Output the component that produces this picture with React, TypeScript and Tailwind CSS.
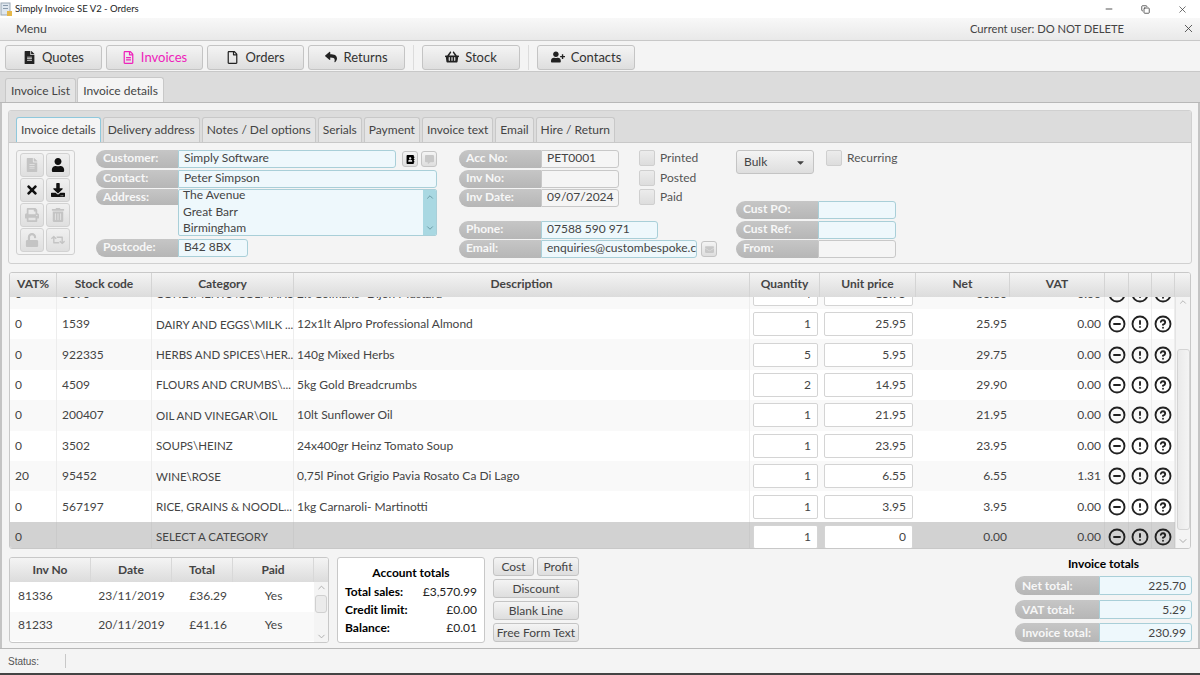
import React from "react";
import { FaFileAlt, FaRegFile, FaRegFileAlt, FaReply, FaShoppingBasket, FaUserPlus, FaUser, FaTimes, FaDownload, FaPrint, FaTrashAlt, FaUnlock, FaRetweet, FaAddressBook, FaEnvelope, FaCommentAlt, FaCaretDown } from "react-icons/fa";
import { CircleMinus, CircleAlert, CircleHelp, ChevronUp, ChevronDown, Minus, X, Copy } from "lucide-react";

const btn = "flex items-center justify-center rounded-[3px] border border-[#c4c4c4] bg-linear-to-b from-[#f4f4f4] to-[#dedede] text-[#333]";

function NavBtn({ icon, label, active, w = "w-[97px]" }: { icon: React.ReactNode; label: string; active?: boolean; w?: string }) {
  return (
    <div className={`${btn} ${w} h-[25px] gap-[6px] text-[13px] ${active ? "text-[#ee22bb]" : ""}`}>
      {icon}
      <span className="pt-[1px]">{label}</span>
    </div>
  );
}

function Pill({ label, w, vw, value, blue, right, tall }: { label: string; w: string; vw: string; value?: string; blue?: boolean; right?: boolean; tall?: boolean }) {
  return (
    <div className={`flex ${tall ? "h-[19px]" : "h-[18px]"} shrink-0`}>
      <div className={`${w} shrink-0 whitespace-nowrap rounded-l-[9px] bg-linear-to-b from-[#c6c6c6] to-[#b6b6b6] pl-[7px] text-[12px] ${tall ? "leading-[19px]" : "leading-[16px]"} font-bold text-[#f7f7f7]`}>{label}</div>
      <div className={`${vw} overflow-hidden whitespace-nowrap rounded-r-[3px] border ${blue ? "border-[#a9cfd8] bg-[#eef8fc]" : "border-[#c8c8c8] bg-[#f5f5f5]"} px-[5px] text-[12px] ${tall ? "leading-[17px]" : "leading-[14px]"} text-[#444] ${right ? "text-right" : ""}`}>{value}</div>
    </div>
  );
}

function ToolBtn({ children, dim }: { children: React.ReactNode; dim?: boolean }) {
  return (
    <div className={`flex h-[24px] w-[24px] items-center justify-center rounded-[3px] border border-[#d2d2d2] bg-linear-to-b from-[#f0f0f0] to-[#dfdfdf] text-[14px] ${dim ? "text-[#c4c4c4]" : "text-[#111]"}`}>{children}</div>
  );
}

function Check({ label }: { label: string }) {
  return (
    <div className="flex h-[18px] items-center gap-[5px] pb-[2px] text-[12px] text-[#555]">
      <div className="h-[16px] w-[16px] rounded-[2px] border border-[#cfcfcf] bg-linear-to-b from-[#ececec] to-[#dddddd]" />
      <span>{label}</span>
    </div>
  );
}

const cols = "grid grid-cols-[47px_95px_142px_456px_70px_96px_94px_95px_24px_23px_23px]";

const rows = [
  ["0", "3690", "CONDIMENTS\\COLMANS", "2lt Colmans- Dijon Mustard", "4", "15.95", "63.80", "0.00"],
  ["0", "1539", "DAIRY AND EGGS\\MILK ...", "12x1lt Alpro Professional Almond", "1", "25.95", "25.95", "0.00"],
  ["0", "922335", "HERBS AND SPICES\\HER...", "140g Mixed Herbs", "5", "5.95", "29.75", "0.00"],
  ["0", "4509", "FLOURS AND CRUMBS\\...", "5kg Gold Breadcrumbs", "2", "14.95", "29.90", "0.00"],
  ["0", "200407", "OIL AND VINEGAR\\OIL", "10lt Sunflower Oil", "1", "21.95", "21.95", "0.00"],
  ["0", "3502", "SOUPS\\HEINZ", "24x400gr Heinz Tomato Soup", "1", "23.95", "23.95", "0.00"],
  ["20", "95452", "WINE\\ROSE", "0,75l Pinot Grigio Pavia Rosato Ca Di Lago", "1", "6.55", "6.55", "1.31"],
  ["0", "567197", "RICE, GRAINS & NOODL...", "1kg Carnaroli- Martinotti", "1", "3.95", "3.95", "0.00"],
  ["0", "", "SELECT A CATEGORY", "", "1", "0", "0.00", "0.00"],
];

const heads: [string, string][] = [["VAT%", "pl-[7px]"], ["Stock code", "justify-center"], ["Category", "justify-center"], ["Description", "justify-center"], ["Quantity", "justify-center"], ["Unit price", "justify-center"], ["Net", "justify-center"], ["VAT", "justify-center"], ["", ""], ["", ""], ["", ""]];

function Row({ r, i }: { r: string[]; i: number }) {
  const sel = i === rows.length - 1;
  const bg = sel ? "bg-[#d2d2d2]" : i % 2 === 1 ? "bg-white" : "bg-[#f9f9f9]";
  const cell = `flex items-center overflow-hidden whitespace-nowrap border-r ${sel ? "border-[#cacaca]" : "border-[#ededed]"} px-[5px]`;
  const input = "flex h-[24px] items-center justify-end rounded-[2px] border border-[#d4d4d4] bg-white px-[6px]";
  const iconCell = `flex items-center justify-center border-r ${sel ? "border-[#cacaca]" : "border-[#ededed]"} text-[#222]`;
  return (
    <div className={`${cols} ${bg} h-[30.4px] shrink-0 text-[12px] text-[#444]`}>
      <div className={cell}>{r[0]}</div>
      <div className={cell}>{r[1]}</div>
      <div className={`${cell} pl-[4px] text-[11.5px]`}>{r[2]}</div>
      <div className={`${cell} pl-[3px]`}>{r[3]}</div>
      <div className="flex items-center justify-end pr-[2px]"><div className={`${input} w-[65px]`}>{r[4]}</div></div>
      <div className="flex items-center justify-end pr-[3px]"><div className={`${input} w-[89px]`}>{r[5]}</div></div>
      <div className={`${cell} justify-end border-r-0 pr-[3px]`}>{r[6]}</div>
      <div className={`${cell} justify-end pr-[3px]`}>{r[7]}</div>
      <div className={iconCell}><CircleMinus size={18} strokeWidth={2.5} /></div>
      <div className={iconCell}><CircleAlert size={18} strokeWidth={2.5} /></div>
      <div className={iconCell}><CircleHelp size={18} strokeWidth={2.5} /></div>
    </div>
  );
}

function Th({ children, w }: { children?: React.ReactNode; w: string }) {
  return <div className={`${w} flex items-center justify-center border-r border-[#d8d8d8] text-[12px] font-bold text-[#444]`}>{children}</div>;
}

function SmallBtn({ label, w }: { label: string; w: string }) {
  return <div className={`${btn} ${w} h-[19px] whitespace-nowrap text-[12px] text-[#444]`}>{label}</div>;
}

function Tab({ label, active, focus, wide }: { label: string; active?: boolean; focus?: boolean; wide?: boolean }) {
  return (
    <div className={`flex items-center whitespace-nowrap rounded-t-[3px] border border-b-0 ${wide ? "px-[5px] pt-[1px]" : "px-[4px]"} text-[12px] text-[#444] ${focus ? "border-[#8fc8dc] bg-[#f4f4f4]" : active ? "border-[#c8c8c8] bg-[#f4f4f4]" : "border-[#c8c8c8] bg-[#e4e4e4]"}`}>{label}</div>
  );
}

function Total({ label, value }: { label: string; value: string }) {
  return <Pill label={label} w="w-[84px]" vw="w-[93px]" value={value} blue right tall />;
}

function MiniRow({ a, b, c, d, odd }: { a: string; b: string; c: string; d: string; odd?: boolean }) {
  return (
    <div className={`grid h-[29.5px] grid-cols-[81px_81px_61px_81px] items-center pb-[2px] text-[12px] text-[#444] ${odd ? "bg-[#f9f9f9]" : "bg-white"}`}>
      <div className="pl-[8px]">{a}</div>
      <div className="text-center">{b}</div>
      <div className="pr-[6px] text-right">{c}</div>
      <div className="text-center">{d}</div>
    </div>
  );
}

function TotalLine({ l, v }: { l: string; v: string }) {
  return (
    <div className="flex h-[18px] items-center justify-between px-[7px] text-[12px] text-[#222]">
      <b className="text-black">{l}</b>
      <span>{v}</span>
    </div>
  );
}

export default function App() {
  return (
    <div className="flex h-[675px] w-[1200px] flex-col overflow-hidden bg-[#f4f4f4] font-['Lato','Open_Sans',sans-serif]">
      <div className="flex h-[18px] shrink-0 items-center justify-between bg-white pr-[12px] text-[9.5px] text-[#222]">
        <div className="flex items-center gap-[2px]">
          <svg width="13" height="15" viewBox="0 0 13 15"><rect x="1" y="1" width="9" height="12" fill="#dfe7ef" stroke="#9aa7b4" /><rect x="3" y="3" width="5" height="1" fill="#8899aa" /><rect x="3" y="6" width="5" height="1" fill="#8899aa" /><rect x="7" y="9" width="5" height="5" fill="#e6b84a" /></svg>
          <span className="pt-[1px]">Simply Invoice SE V2 - Orders</span>
        </div>
        <div className="flex items-center gap-[27px] text-[#333]">
          <Minus size={10} />
          <Copy size={9} />
          <X size={11} strokeWidth={1.5} />
        </div>
      </div>

      <div className="flex h-[23px] shrink-0 items-center justify-between border-b border-[#c8c8c8] bg-linear-to-b from-[#f8f8f8] to-[#e9e9e9] pl-[16px] pr-[5px] text-[12px] text-[#444]">
        <span>Menu</span>
        <div className="flex items-center gap-[58px]">
          <span className="text-[11.2px]">Current user: DO NOT DELETE</span>
          <X size={13} strokeWidth={1.6} />
        </div>
      </div>

      <div className="flex h-[31px] shrink-0 items-center border-b border-[#c8c8c8] pl-[5px] pt-[2px]">
        <div className="flex gap-[4px]">
          <NavBtn icon={<FaFileAlt size={13} className="text-[#222]" />} label="Quotes" />
          <NavBtn icon={<FaRegFileAlt size={13} />} label="Invoices" active />
          <NavBtn icon={<FaRegFile size={13} className="text-[#222]" />} label="Orders" />
          <NavBtn icon={<FaReply size={12} className="text-[#222]" />} label="Returns" />
        </div>
        <div className="mx-[8px] h-[25px] w-px bg-[#dcdcdc]" />
        <NavBtn icon={<FaShoppingBasket size={14} className="text-[#222]" />} label="Stock" w="w-[98px]" />
        <div className="mx-[8px] h-[25px] w-px bg-[#dcdcdc]" />
        <NavBtn icon={<FaUserPlus size={14} className="text-[#222]" />} label="Contacts" w="w-[98px]" />
      </div>

      <div className="flex h-[31px] shrink-0 items-end gap-[1px] border-b border-[#b8b8b8] bg-[#dcdcdc] pl-[5px]">
        <div className="flex h-[24px]"><Tab label="Invoice List" wide /></div>
        <div className="flex h-[25px]"><Tab label="Invoice details" active wide /></div>
      </div>

      <div className="flex min-h-0 flex-1 flex-col border-x-2 border-[#c4c4c4] px-[6px] pb-[5px] pt-[7px]">
        <div className="flex h-[154px] shrink-0 flex-col overflow-hidden rounded-[3px] border border-[#d0d0d0] bg-[#f4f4f4]">
          <div className="flex h-[32px] shrink-0 items-end gap-[2px] border-b border-[#c8c8c8] bg-[#dcdcdc] pl-[7px]">
            <div className="flex h-[25px]"><Tab label="Invoice details" focus /></div>
            {["Delivery address", "Notes / Del options", "Serials", "Payment", "Invoice text", "Email", "Hire / Return"].map((t) => (
              <div key={t} className="flex h-[25px]"><Tab label={t} /></div>
            ))}
          </div>
          <div className="flex min-h-0 flex-1 pl-[7px] pt-[7px]">
            <div className="grid h-[105px] w-[59px] shrink-0 grid-cols-2 content-center justify-center gap-[1px] rounded-[3px] border border-[#d0d0d0] px-[3px]">
              <ToolBtn dim><FaFileAlt /></ToolBtn>
              <ToolBtn><FaUser /></ToolBtn>
              <ToolBtn><FaTimes /></ToolBtn>
              <ToolBtn><FaDownload /></ToolBtn>
              <ToolBtn dim><FaPrint /></ToolBtn>
              <ToolBtn dim><FaTrashAlt /></ToolBtn>
              <ToolBtn dim><FaUnlock /></ToolBtn>
              <ToolBtn dim><FaRetweet /></ToolBtn>
            </div>

            <div className="ml-[21px] flex w-[341px] shrink-0 flex-col gap-[1.6px]">
              <div className="flex items-center">
                <Pill label="Customer:" w="w-[82px]" vw="w-[218px]" value="Simply Software" blue />
                <div className={`${btn} ml-[6px] h-[16px] w-[16px] text-[9px] text-black`}><FaAddressBook /></div>
                <div className={`${btn} ml-[3px] h-[16px] w-[16px] text-[9px] text-[#c8c8c8]`}><FaCommentAlt /></div>
              </div>
              <Pill label="Contact:" w="w-[82px]" vw="w-[259px]" value="Peter Simpson" blue />
              <div className="flex h-[47px]">
                <div className="h-[16px] w-[82px] shrink-0 rounded-l-[8px] bg-linear-to-b from-[#c6c6c6] to-[#b6b6b6] pl-[7px] text-[12px] leading-[15px] font-bold text-[#f7f7f7]">Address:</div>
                <div className="flex h-[47px] w-[259px] overflow-hidden rounded-[2px] border border-[#a9cfd8] bg-[#eef8fc] text-[12px] text-[#444]">
                  <div className="-mt-[3px] flex-1 pl-[4px] leading-[16.5px]">
                    <div>The Avenue</div>
                    <div>Great Barr</div>
                    <div>Birmingham</div>
                  </div>
                  <div className="flex w-[13px] flex-col items-center justify-between bg-[#a9d8e2] py-[2px] text-[#5f8f9a]">
                    <ChevronUp size={10} />
                    <ChevronDown size={10} />
                  </div>
                </div>
              </div>
              <div className="mt-[1.5px]"><Pill label="Postcode:" w="w-[82px]" vw="w-[70px]" value="B42 8BX" blue /></div>
            </div>

            <div className="ml-[22px] flex w-[260px] shrink-0 flex-col gap-[1.6px]">
              <Pill label="Acc No:" w="w-[82px]" vw="w-[78px]" value="PET0001" />
              <Pill label="Inv No:" w="w-[82px]" vw="w-[78px]" />
              <Pill label="Inv Date:" w="w-[82px]" vw="w-[78px]" value="09/07/2024" />
              <div className="mt-[12.6px]"><Pill label="Phone:" w="w-[82px]" vw="w-[117px]" value="07588 590 971" blue /></div>
              <div className="-mt-[0.6px] flex items-center">
                <Pill label="Email:" w="w-[82px]" vw="w-[156px]" value="enquiries@custombespoke.co.uk" blue />
                <div className={`${btn} ml-[4px] h-[16px] w-[16px] text-[9px] text-[#c8c8c8]`}><FaEnvelope /></div>
              </div>
            </div>

            <div className="-ml-[80px] flex w-[97px] shrink-0 flex-col gap-[1.6px]">
              <Check label="Printed" />
              <Check label="Posted" />
              <Check label="Paid" />
            </div>

            <div className="flex w-[170px] shrink-0 flex-col">
              <div className="flex h-[51px] items-start">
                <div className="flex h-[24px] w-[78px] items-center justify-between rounded-[3px] border border-[#c4c4c4] bg-linear-to-b from-[#f4f4f4] to-[#dedede] px-[7px] text-[12px] text-[#444]">
                  <span>Bulk</span>
                  <FaCaretDown size={11} />
                </div>
                <div className="ml-[12px]"><Check label="Recurring" /></div>
              </div>
              <div className="flex flex-col gap-[1.6px]">
                <Pill label="Cust PO:" w="w-[82px]" vw="w-[78px]" blue />
                <Pill label="Cust Ref:" w="w-[82px]" vw="w-[78px]" blue />
                <Pill label="From:" w="w-[82px]" vw="w-[78px]" />
              </div>
            </div>
          </div>
        </div>

        <div className="ml-[1px] mt-[8px] flex h-[277px] w-[1182px] shrink-0 flex-col overflow-hidden rounded-[3px] border border-[#c8c8c8] bg-white">
          <div className="flex h-[24px] shrink-0 bg-linear-to-b from-[#f4f4f4] to-[#dcdcdc]">
            <div className={`${cols} flex-1 text-[12px] font-bold text-[#444]`}>
              {heads.map(([h, c], i) => (
                <div key={i} className={`flex items-center border-r border-[#d4d4d4] pb-[2px] ${c}`}>{h}</div>
              ))}
            </div>
            <div className="w-[15px]" />
          </div>
          <div className="flex min-h-0 flex-1">
            <div className="min-w-0 flex-1 overflow-hidden">
              <div className="-mt-[18.4px]">
                {rows.map((r, i) => <Row key={i} r={r} i={i} />)}
              </div>
            </div>
            <div className="flex w-[15px] shrink-0 flex-col items-center border-l border-[#e4e4e4] bg-[#f4f4f4] text-[#aaa]">
              <ChevronUp size={12} className="h-[10px]" />
              <div className="mt-[42px] h-[181px] w-[13px] rounded-[3px] border border-[#d4d4d4] bg-linear-to-r from-[#eaeaea] to-[#f4f4f4]" />
              <ChevronDown size={12} className="mb-[1px] mt-auto" />
            </div>
          </div>
        </div>

        <div className="mt-[8px] flex shrink-0">
          <div className="ml-[1px] flex h-[86px] w-[320px] shrink-0 flex-col overflow-hidden rounded-[3px] border border-[#c8c8c8] bg-white">
            <div className="flex h-[24px] shrink-0 bg-linear-to-b from-[#f4f4f4] to-[#dcdcdc] text-[12px] font-bold text-[#444]">
              <Th w="w-[81px]">Inv No</Th>
              <Th w="w-[81px]">Date</Th>
              <Th w="w-[61px]">Total</Th>
              <Th w="w-[81px]">Paid</Th>
            </div>
            <div className="flex min-h-0 flex-1">
              <div className="w-[304px] shrink-0">
                <MiniRow a="81336" b="23/11/2019" c="£36.29" d="Yes" />
                <MiniRow a="81233" b="20/11/2019" c="£41.16" d="Yes" odd />
              </div>
              <div className="flex flex-1 flex-col items-center bg-[#f4f4f4] text-[#aaa]">
                <ChevronUp size={11} />
                <div className="mt-[2px] h-[18px] w-[12px] rounded-[3px] border border-[#d0d0d0] bg-[#ebebeb]" />
                <ChevronDown size={11} className="mt-auto" />
              </div>
            </div>
          </div>

          <div className="ml-[8px] h-[86px] w-[148px] shrink-0 rounded-[3px] border border-[#c8c8c8] bg-white pt-[7px]">
            <div className="mb-[2px] h-[16px] text-center text-[12px] leading-[16px] font-bold text-black">Account totals</div>
            <TotalLine l="Total sales:" v="£3,570.99" />
            <TotalLine l="Credit limit:" v="£0.00" />
            <TotalLine l="Balance:" v="£0.01" />
          </div>

          <div className="ml-[8px] flex w-[86px] shrink-0 flex-col gap-[3px]">
            <div className="flex gap-[3px]">
              <SmallBtn label="Cost" w="w-[41px]" />
              <SmallBtn label="Profit" w="w-[42px]" />
            </div>
            <SmallBtn label="Discount" w="w-full" />
            <SmallBtn label="Blank Line" w="w-full" />
            <SmallBtn label="Free Form Text" w="w-full" />
          </div>

          <div className="ml-auto flex w-[177px] shrink-0 flex-col gap-[4.5px]">
            <div className="mb-[1.5px] flex h-[13px] items-center justify-center text-[12px] font-bold text-black">Invoice totals</div>
            <Total label="Net total:" value="225.70" />
            <Total label="VAT total:" value="5.29" />
            <Total label="Invoice total:" value="230.99" />
          </div>
        </div>
      </div>

      <div className="flex h-[27px] shrink-0 items-center border-b-2 border-t border-b-[#444] border-t-[#b8b8b8] pl-[8px] font-['Liberation_Sans',sans-serif] text-[10px] text-[#555]">
        <span className="w-[57px]">Status:</span>
        <div className="h-[14px] w-px bg-[#c8c8c8]" />
      </div>
    </div>
  );
}
